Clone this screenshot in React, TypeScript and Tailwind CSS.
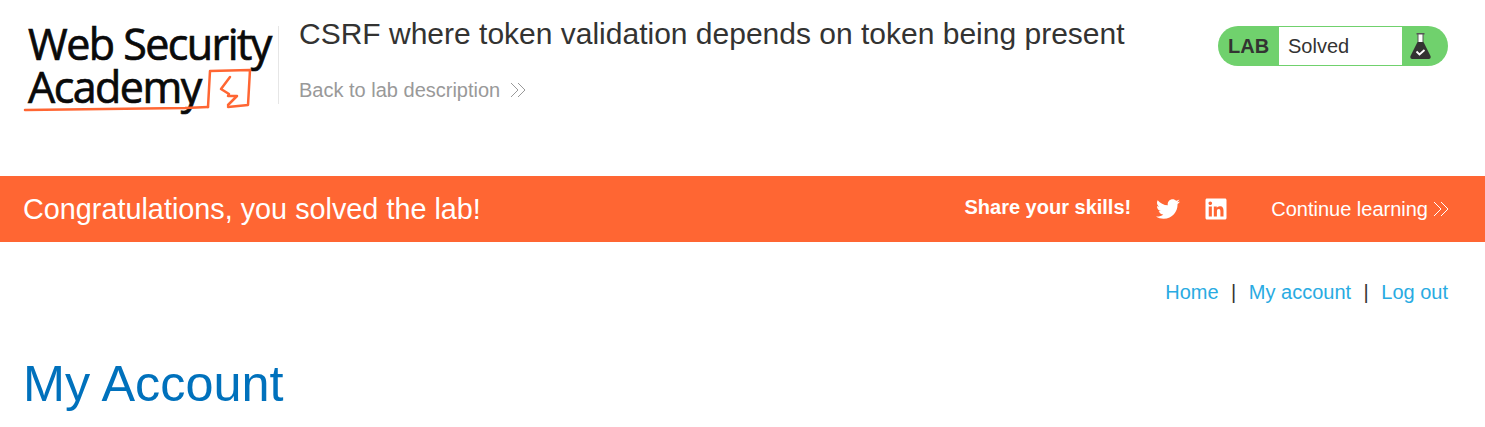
import React from "react";
import { FaTwitter, FaLinkedin } from "react-icons/fa";

const Chevrons = ({ className }: { className?: string }) => (
  <svg viewBox="0 0 16 16" className={className} fill="none" stroke="currentColor" strokeWidth="1">
    <path d="M1 1l7 7-7 7" />
    <path d="M8 1l7 7-7 7" />
  </svg>
);

const Flask = () => (
  <svg viewBox="0 0 21 26" className="h-[26px] w-[21px]">
    <path d="M6.500 0h8v1.500h-1V9h-6V1.500h-1z" fill="#555" />
    <rect x="8.500" y="1.500" width="4" height="7.500" fill="#fff" />
    <path d="M7.500 9h6l7 14c.6 1.600-.2 3-1.600 3H2.100C.7 26-.1 24.600.5 23z" fill="#333332" />
    <path d="M6.500 18.500l3 3 5-4.500" fill="none" stroke="#fff" strokeWidth="1.800" />
  </svg>
);

const Logo = () => (
  <div className="relative mt-[10px] h-[78px] w-[256px] shrink-0 border-r border-[#e6e6e6] font-['Open_Sans',sans-serif] text-[#0a0a0a]">
    <div className="ml-[5px] -mt-[4px] whitespace-nowrap text-[43px] leading-[43px] tracking-[-1.550px] [-webkit-text-stroke:0.7px_#0a0a0a]">
      <div>Web Security</div>
      <div>Academy</div>
    </div>
    <svg viewBox="0 0 240 90" className="absolute left-0 top-0 h-[90px] w-[240px]" fill="none" stroke="#ff6633" strokeLinecap="round" strokeLinejoin="round">
      <path d="M2 84c50-1 110-1 160-2l23-1" strokeWidth="2.500" />
      <path d="M185 81l2-36 40-1-2 35-20 2" strokeWidth="2.500" />
      <path d="M207 51l-9 12 8 5-1 2h9l-9 9" strokeWidth="2.500" />
    </svg>
  </div>
);

export default function App() {
  return (
    <div className="min-h-[427px] overflow-hidden bg-white font-['Liberation_Sans',sans-serif]">
      <header className="flex h-[176px] items-start pl-[23px] pr-[37px] pt-[16px]">
        <Logo />
        <div className="ml-[20px] flex-1">
          <h2 className="whitespace-nowrap text-[30px] leading-[36px] text-[#333332]">
            CSRF where token validation depends on token being present
          </h2>
          <a className="mt-[26px] flex items-center text-[20px] leading-[24px] text-[#999999]">
            Back to lab description
            <Chevrons className="ml-[10px] h-[16px] w-[16px]" />
          </a>
        </div>
        <div className="mt-[10px] flex h-[40px] w-[230px] items-stretch overflow-hidden rounded-[20px] bg-[#70d16d]">
          <span className="flex w-[61px] items-center pl-[10px] text-[20px] font-bold text-[#333332]">LAB</span>
          <span className="my-[1px] flex w-[123px] items-center bg-white pl-[9px] text-[20px] text-[#333332]">Solved</span>
          <span className="flex flex-1 items-center pl-[8px]">
            <Flask />
          </span>
        </div>
      </header>

      <section className="flex h-[66px] items-center bg-[#ff6633] pl-[23px] pr-[36px] text-white">
        <h4 className="mt-[2px] flex-1 text-[28.800px]">Congratulations, you solved the lab!</h4>
        <span className="mb-[4px] text-[20px] font-bold">Share your skills!</span>
        <FaTwitter className="ml-[25px] h-[24px] w-[24px]" />
        <FaLinkedin className="ml-[24px] h-[24px] w-[24px]" />
        <a className="ml-[43px] flex items-center text-[20px]">
          Continue learning
          <Chevrons className="ml-[5px] h-[16px] w-[16px]" />
        </a>
      </section>

      <nav className="mr-[37px] mt-[38px] flex justify-end text-[20px] leading-[24px] text-[#29abe2]">
        <a>Home</a>
        <span className="mx-[12.500px] text-[#333332]">|</span>
        <a>My account</a>
        <span className="mx-[12.500px] text-[#333332]">|</span>
        <a>Log out</a>
      </nav>

      <h1 className="ml-[23px] mt-[50px] text-[50.400px] leading-[60px] text-[#0071bc]">My Account</h1>
    </div>
  );
}
